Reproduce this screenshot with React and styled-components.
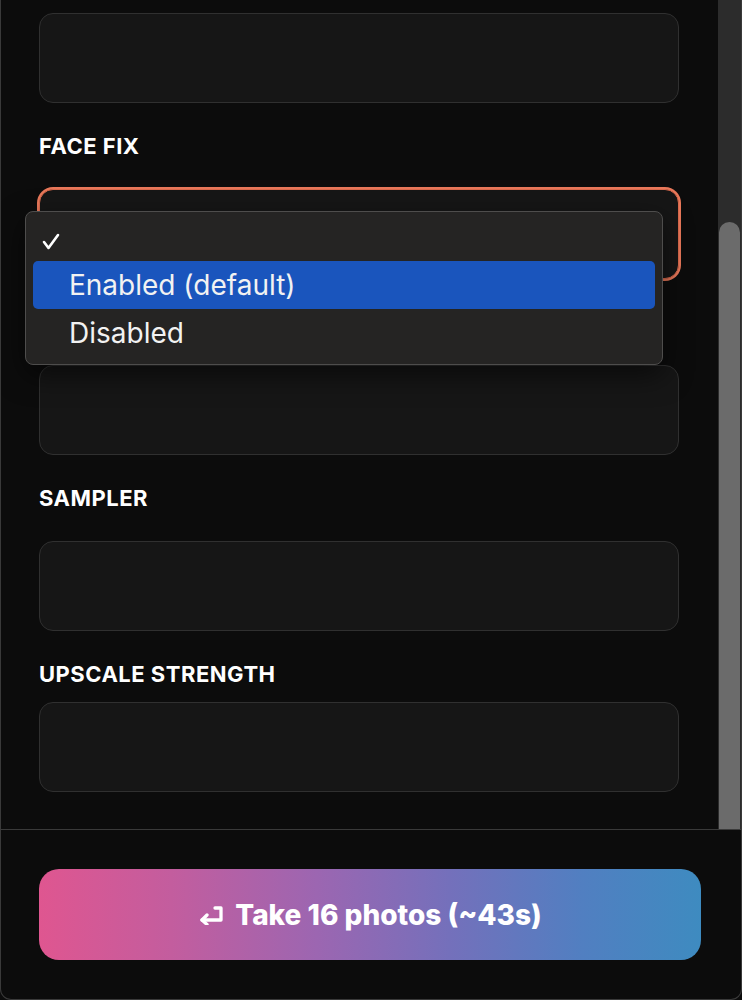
import React, { useLayoutEffect, useRef } from "react";
import styled, { createGlobalStyle } from "styled-components";

const Global = createGlobalStyle`
  html, body { margin: 0; padding: 0; background: #0c0c0c; }
  body { font-family: Inter, "Noto Sans", "Liberation Sans", sans-serif; color: #fff; }
  * { box-sizing: border-box; }
`;

const Panel = styled.div`
  height: 1000px;
  display: flex;
  flex-direction: column;
  background: #0c0c0c;
  border: 1px solid #3a3a3a;
  border-top: none;
  border-radius: 0 0 11px 11px;
  overflow: hidden;
`;

const ScrollArea = styled.div`
  height: 830px;
  flex: none;
  display: flex;
  border-bottom: 1px solid #3a3a3a;
`;

const Viewport = styled.div`
  flex: 1;
  min-width: 0;
  overflow: hidden;
`;

const Track = styled.div`
  width: 23px;
  flex: none;
  background: #2c2c2c;
  display: flex;
  flex-direction: column;
  padding: 222px 1px 0 1px;
`;

const Thumb = styled.div`
  flex: 1;
  background: #6b6b6b;
  border-radius: 11px 11px 0 0;
`;

const Content = styled.div`
  display: flex;
  flex-direction: column;
  gap: 31px;
  padding: 87px 39px 37px 38px;
`;

const Field = styled.div`
  position: relative;
  display: flex;
  flex-direction: column;
`;

const Label = styled.div`
  height: 24px;
  font-size: 22px;
  line-height: 24px;
  font-weight: 700;
  letter-spacing: 0.5px;
  text-transform: uppercase;
  color: #fff;
  margin-bottom: ${(p) => (p.$tight ? "16px" : "31px")};
`;

const Control = styled.div`
  height: 90px;
  border-radius: 14px;
  background: #161616;
  border: 1px solid ${(p) => (p.$focused ? "#d9694c" : "#303030")};
  box-shadow: ${(p) => (p.$focused ? "0 0 0 2px #e8785a" : "none")};
`;

const Menu = styled.div`
  position: absolute;
  left: -14px;
  top: 77px;
  width: 638px;
  height: 154px;
  background: #252423;
  border: 1px solid #4e4d4c;
  border-radius: 8px;
  padding: 1px 7px 7px 7px;
  box-shadow: 0 10px 28px rgba(0, 0, 0, 0.55);
  z-index: 5;
  display: flex;
  flex-direction: column;
`;

const Option = styled.div`
  height: 48px;
  flex: none;
  display: grid;
  grid-template-columns: 36px 1fr;
  align-items: center;
  border-radius: 5px;
  background: ${(p) => (p.$active ? "#1a55bd" : "transparent")};
  font-size: 28px;
  color: #f2f2f2;
  font-family: Inter, "Noto Sans", "Liberation Sans", sans-serif;
`;

const Check = styled.span`
  display: flex;
  padding-left: 9px;
  padding-top: 8px;
`;

const Footer = styled.div`
  flex: 1;
  padding: 39px 40px 38px 38px;
`;

const Button = styled.button`
  width: 100%;
  height: 91px;
  border: none;
  border-radius: 20px;
  background: linear-gradient(90deg, #df5690 0%, #c35d9e 20%, #9c66b1 42%, #7470bb 62%, #517fc1 82%, #3e8bc0 100%);
  color: #fff;
  font-family: Inter, "Noto Sans", "Liberation Sans", sans-serif;
  font-size: 28px;
  font-weight: 800;
  display: flex;
  align-items: center;
  justify-content: center;
  gap: 10px;
  cursor: pointer;
`;

const ReturnIcon = () => (
  <svg width="27" height="20" viewBox="0 0 27 20" fill="none" stroke="#fff" strokeWidth="3.3" strokeLinecap="round" strokeLinejoin="round">
    <polyline points="17,3 23,3 23,15 4,15" />
    <polyline points="9,10 4,15 9,19.5" />
  </svg>
);

const CheckIcon = () => (
  <svg width="18" height="17" viewBox="0 0 18 17" fill="none" stroke="#fff" strokeWidth="2.6" strokeLinecap="round" strokeLinejoin="round">
    <polyline points="2,9 6.5,15 16,2" />
  </svg>
);

export default function App() {
  const ref = useRef(null);
  useLayoutEffect(() => {
    if (ref.current) ref.current.scrollTop = ref.current.scrollHeight;
  }, []);
  return (
    <>
      <Global />
      <Panel>
        <ScrollArea>
          <Viewport ref={ref}>
            <Content>
              <Field>
                <Label>{"\u00a0"}</Label>
                <Control />
              </Field>
              <Field>
                <Label>{"\u00a0"}</Label>
                <Control />
              </Field>
              <Field>
                <Label>Face fix</Label>
                <Control $focused />
                <Menu>
                  <Option>
                    <Check><CheckIcon /></Check>
                    <span></span>
                  </Option>
                  <Option $active>
                    <span />
                    <span>Enabled (default)</span>
                  </Option>
                  <Option>
                    <span />
                    <span>Disabled</span>
                  </Option>
                </Menu>
              </Field>
              <Field>
                <Label>{"\u00a0"}</Label>
                <Control />
              </Field>
              <Field>
                <Label>Sampler</Label>
                <Control />
              </Field>
              <Field>
                <Label $tight>Upscale strength</Label>
                <Control />
              </Field>
            </Content>
          </Viewport>
          <Track>
            <Thumb />
          </Track>
        </ScrollArea>
        <Footer>
          <Button>
            <ReturnIcon />
            <span>Take 16 photos (~43s)</span>
          </Button>
        </Footer>
      </Panel>
    </>
  );
}
